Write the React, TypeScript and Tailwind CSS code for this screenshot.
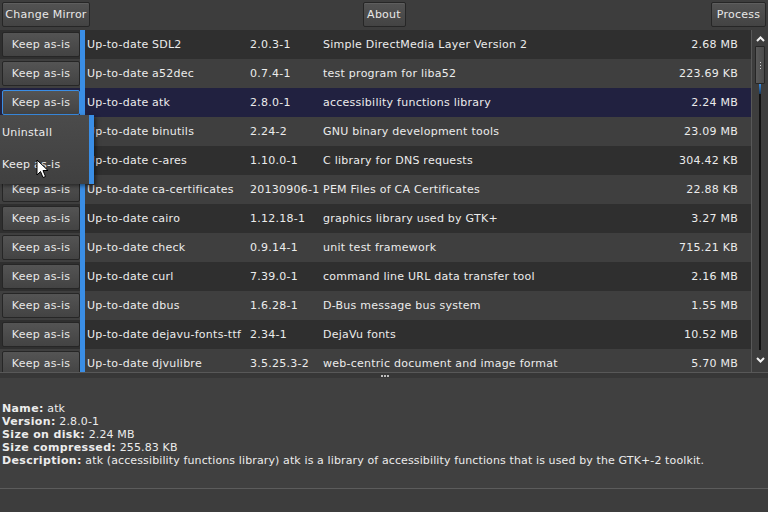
import React from 'react';

interface Pkg {
  name: string;
  version: string;
  desc: string;
  size: string;
}

const packages: Pkg[] = [
  { name: 'SDL2', version: '2.0.3-1', desc: 'Simple DirectMedia Layer Version 2', size: '2.68 MB' },
  { name: 'a52dec', version: '0.7.4-1', desc: 'test program for liba52', size: '223.69 KB' },
  { name: 'atk', version: '2.8.0-1', desc: 'accessibility functions library', size: '2.24 MB' },
  { name: 'binutils', version: '2.24-2', desc: 'GNU binary development tools', size: '23.09 MB' },
  { name: 'c-ares', version: '1.10.0-1', desc: 'C library for DNS requests', size: '304.42 KB' },
  { name: 'ca-certificates', version: '20130906-1', desc: 'PEM Files of CA Certificates', size: '22.88 KB' },
  { name: 'cairo', version: '1.12.18-1', desc: 'graphics library used by GTK+', size: '3.27 MB' },
  { name: 'check', version: '0.9.14-1', desc: 'unit test framework', size: '715.21 KB' },
  { name: 'curl', version: '7.39.0-1', desc: 'command line URL data transfer tool', size: '2.16 MB' },
  { name: 'dbus', version: '1.6.28-1', desc: 'D-Bus message bus system', size: '1.55 MB' },
  { name: 'dejavu-fonts-ttf', version: '2.34-1', desc: 'DejaVu fonts', size: '10.52 MB' },
  { name: 'djvulibre', version: '3.5.25.3-2', desc: 'web-centric document and image format', size: '5.70 MB' },
];

const btn =
  'h-[25px] px-[1px] whitespace-nowrap rounded-[2px] border border-[#262626] bg-gradient-to-b from-[#535353] to-[#434343] text-[#e8e8e8] shadow-[inset_0_1px_0_#5e5e5e]';

const Row: React.FC<{ p: Pkg; i: number }> = ({ p, i }) => {
  const selected = i === 2;
  // rows 4 and 5 sit under the open popup, so their buttons are hidden
  const covered = i === 3 || i === 4;
  const bg = selected ? 'bg-[#212140]' : i % 2 === 0 ? 'bg-[#2f2f2f]' : 'bg-[#3f3f3f]';
  return (
    <div className={`flex h-[29px] shrink-0 items-center whitespace-nowrap ${bg}`}>
      <div className="flex h-full w-[80px] shrink-0 items-center pl-[2px]">
        <div
          className={`flex h-[25px] w-[78px] items-center justify-center rounded-[2px] border bg-gradient-to-b from-[#545454] to-[#434343] text-[#e8e8e8] ${
            selected ? 'border-[#3a8ee6]' : 'border-[#262626]'
          } ${covered ? 'invisible' : ''}`}
        >
          Keep as-is
        </div>
      </div>
      <div className="h-full w-[5px] shrink-0 bg-[#3a8ee6]" />
      <div className="w-[67px] shrink-0 pl-[2px] text-[#ececec]">Up-to-date</div>
      <div className="w-[98px] shrink-0 text-[#ececec]">{p.name}</div>
      <div className="w-[73px] shrink-0 text-[#ececec]">{p.version}</div>
      <div className="flex-1 text-[#ececec]">{p.desc}</div>
      <div className="shrink-0 pr-[13px] text-right text-[#ececec]">{p.size}</div>
    </div>
  );
};

const Chevron: React.FC<{ up?: boolean }> = ({ up }) => (
  <svg width="9" height="6" viewBox="0 0 9 6">
    <path
      d={up ? 'M1 5 L4.5 1.5 L8 5' : 'M1 1 L4.5 4.5 L8 1'}
      fill="none"
      stroke="#f0f0f0"
      strokeWidth="2"
    />
  </svg>
);

export default function App() {
  return (
    <div
      className="relative flex h-[512px] w-[768px] flex-col overflow-hidden bg-[#3d3d3d] text-[11px] leading-[13px] tracking-[0.25px]"
      style={{ fontFamily: '"DejaVu Sans", sans-serif' }}
    >
      {/* toolbar */}
      <div className="grid h-[30px] shrink-0 grid-cols-[1fr_auto_1fr] items-start px-[2px] pt-[2px]">
        <div>
          <button className={`${btn} w-[88px]`}>Change Mirror</button>
        </div>
        <button className={`${btn} w-[43px]`}>About</button>
        <div className="flex justify-end">
          <button className={`${btn} w-[55px]`}>Process</button>
        </div>
      </div>

      {/* package list */}
      <div className="flex h-[343px] shrink-0 border-b border-[#585858]">
        <div className="flex flex-1 flex-col overflow-hidden border-r border-[#585858]">
          {packages.map((p, i) => (
            <Row key={p.name} p={p} i={i} />
          ))}
        </div>
        <div className="flex w-[16px] flex-col items-center bg-[#3d3d3d]">
          <div className="mt-[5px] flex h-[8px] items-center">
            <Chevron up />
          </div>
          <div className="mt-[3px] flex h-[38px] w-[10px] flex-col items-center justify-center gap-[2px] rounded-[1px] border border-[#262626] bg-gradient-to-r from-[#5a5a5a] to-[#4a4a4a]">
            <div className="h-[1px] w-[1px] bg-[#cfcfcf]" />
            <div className="h-[1px] w-[1px] bg-[#cfcfcf]" />
            <div className="h-[1px] w-[1px] bg-[#cfcfcf]" />
          </div>
          <div className="flex w-[2px] flex-1 flex-col">
            <div className="h-[10px] bg-gradient-to-b from-[#3a8ee6] to-[#1a3a5a]" />
            <div className="flex-1 bg-[#111111]" />
          </div>
          <div className="mb-[8px] mt-[6px] flex h-[8px] items-center">
            <Chevron />
          </div>
        </div>
      </div>

      {/* splitter */}
      <div className="flex h-[5px] shrink-0 items-center justify-center gap-[1px] bg-[#373737] pl-[2px]">
        <div className="h-[2px] w-[2px] bg-[#bdbdbd]" />
        <div className="h-[2px] w-[2px] bg-[#bdbdbd]" />
        <div className="h-[2px] w-[2px] bg-[#bdbdbd]" />
      </div>

      {/* details */}
      <div className="flex h-[110px] shrink-0 flex-col justify-center bg-[#404040] pl-[2px] pt-[2px] tracking-[0.12px] text-[#ececec]">
        <div>
          <b className="tracking-[0.35px]">Name:</b> atk
        </div>
        <div>
          <b className="tracking-[0.35px]">Version:</b> 2.8.0-1
        </div>
        <div>
          <b className="tracking-[0.35px]">Size on disk:</b> 2.24 MB
        </div>
        <div>
          <b className="tracking-[0.35px]">Size compressed:</b> 255.83 KB
        </div>
        <div>
          <b className="tracking-[0.35px]">Description:</b> atk (accessibility functions library) atk is a library of
          accessibility functions that is used by the GTK+-2 toolkit.
        </div>
      </div>

      {/* status bar */}
      <div className="flex-1 border-t border-[#5c5c5c] bg-[#3d3d3d]" />

      {/* popup menu */}
      <div className="absolute left-0 top-[115px] flex h-[69px] w-[94px] shadow-[2px_2px_4px_rgba(0,0,0,0.5)]">
        <div className="flex flex-1 flex-col justify-between bg-gradient-to-b from-[#4b4b4b] to-[#404040] pb-[13px] pl-[2px] pt-[11px] text-[#ececec]">
          <div>Uninstall</div>
          <div>Keep as-is</div>
        </div>
        <div className="w-[5px] bg-[#3a8ee6]" />
      </div>

      {/* mouse cursor */}
      <svg className="absolute left-[36px] top-[159px]" width="14" height="20" viewBox="0 0 14 20">
        <path d="M1 1 L1 16 L4.5 12.5 L7 18.5 L9.5 17.5 L7 11.5 L12 11.5 Z" fill="#ffffff" stroke="#000000" strokeWidth="1" />
      </svg>
    </div>
  );
}
